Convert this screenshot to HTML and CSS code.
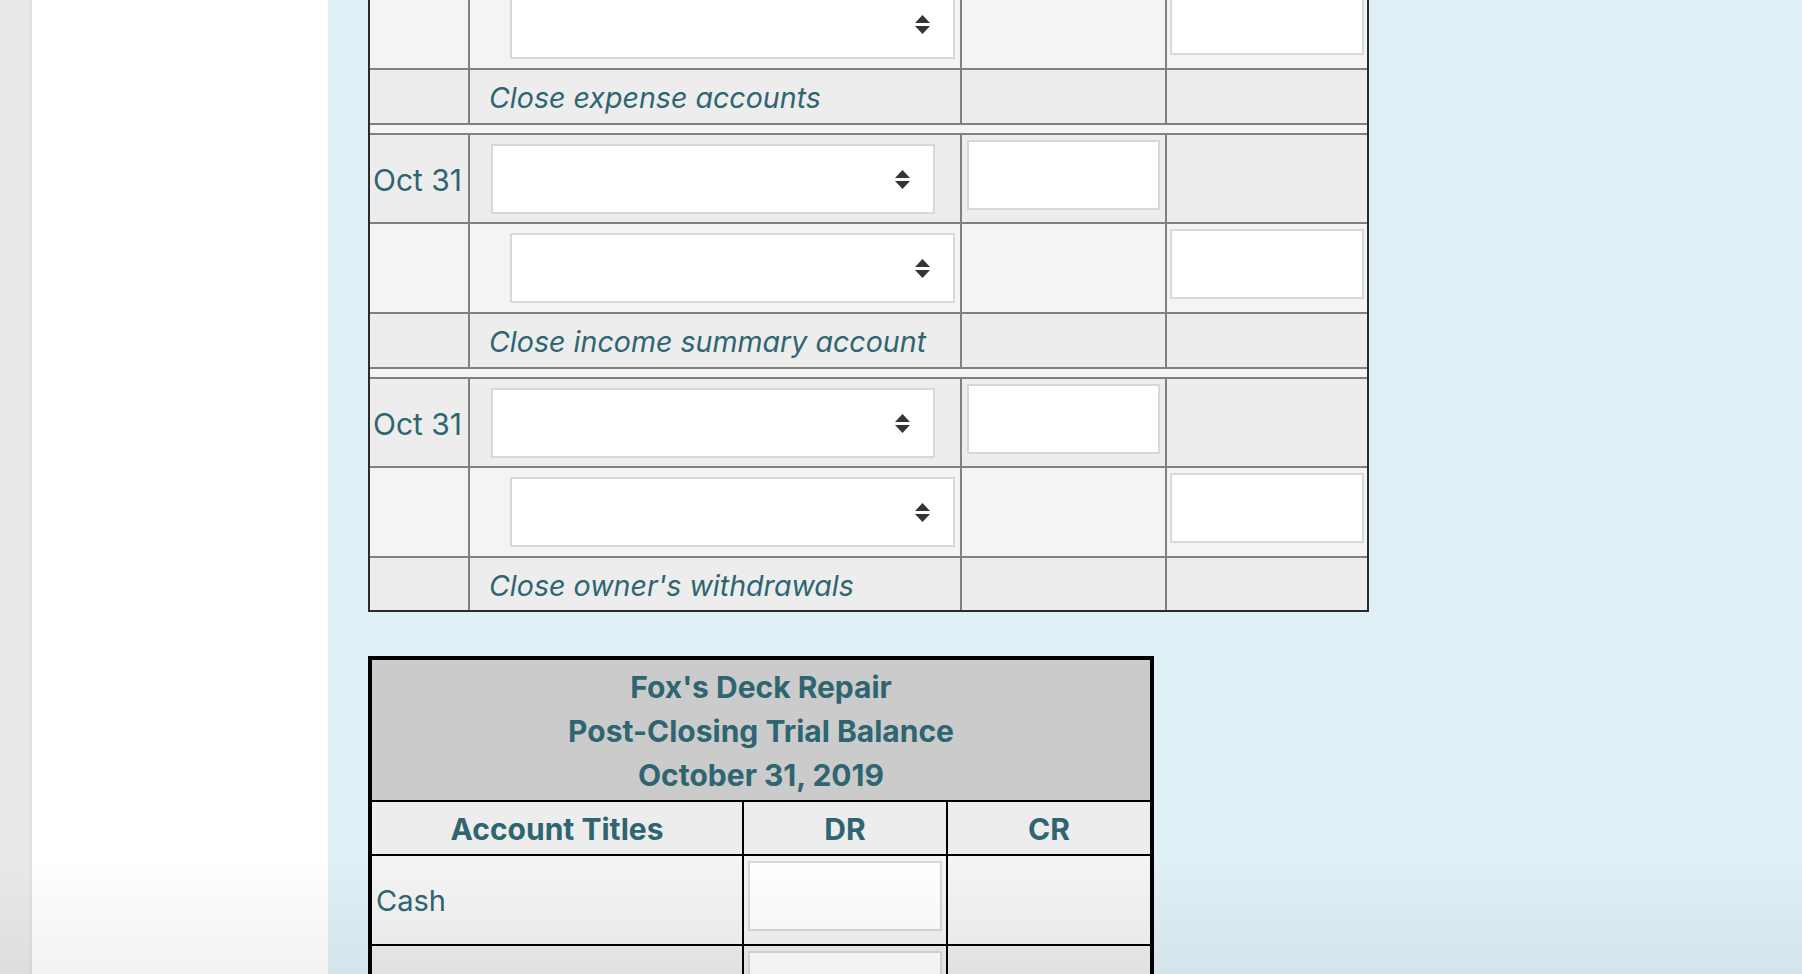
FILE: index.html
```html
<!DOCTYPE html>
<html lang="en">
<head>
<meta charset="utf-8">
<title>Closing entries</title>
<link rel="stylesheet" href="styles.css">
</head>
<body>
<div class="app">
  <div class="rail"></div>
  <div class="sidebar"></div>
  <main class="main">
    <table class="journal">
      <colgroup>
        <col class="k-date"><col class="k-acct"><col class="k-dr"><col class="k-cr">
      </colgroup>
      <tr class="credit">
        <td class="c-date"></td>
        <td class="c-acct"><div class="sel sel-cr"><select></select><svg class="arrows" viewBox="0 0 15 19"><polygon points="0,8 7.5,0 15,8"/><polygon points="0,11 15,11 7.5,19"/></svg></div></td>
        <td class="c-dr"></td>
        <td class="c-cr"><input class="amt amt-cr" type="text"></td>
      </tr>
      <tr class="desc">
        <td class="c-date"></td>
        <td class="c-acct">Close expense accounts</td>
        <td class="c-dr"></td>
        <td class="c-cr"></td>
      </tr>
      <tr class="sep"><td colspan="4"></td></tr>
      <tr class="debit">
        <td class="c-date">Oct 31</td>
        <td class="c-acct"><div class="sel sel-dr"><select></select><svg class="arrows" viewBox="0 0 15 19"><polygon points="0,8 7.5,0 15,8"/><polygon points="0,11 15,11 7.5,19"/></svg></div></td>
        <td class="c-dr"><input class="amt amt-dr" type="text"></td>
        <td class="c-cr"></td>
      </tr>
      <tr class="credit">
        <td class="c-date"></td>
        <td class="c-acct"><div class="sel sel-cr"><select></select><svg class="arrows" viewBox="0 0 15 19"><polygon points="0,8 7.5,0 15,8"/><polygon points="0,11 15,11 7.5,19"/></svg></div></td>
        <td class="c-dr"></td>
        <td class="c-cr"><input class="amt amt-cr" type="text"></td>
      </tr>
      <tr class="desc">
        <td class="c-date"></td>
        <td class="c-acct">Close income summary account</td>
        <td class="c-dr"></td>
        <td class="c-cr"></td>
      </tr>
      <tr class="sep"><td colspan="4"></td></tr>
      <tr class="debit">
        <td class="c-date">Oct 31</td>
        <td class="c-acct"><div class="sel sel-dr"><select></select><svg class="arrows" viewBox="0 0 15 19"><polygon points="0,8 7.5,0 15,8"/><polygon points="0,11 15,11 7.5,19"/></svg></div></td>
        <td class="c-dr"><input class="amt amt-dr" type="text"></td>
        <td class="c-cr"></td>
      </tr>
      <tr class="credit">
        <td class="c-date"></td>
        <td class="c-acct"><div class="sel sel-cr"><select></select><svg class="arrows" viewBox="0 0 15 19"><polygon points="0,8 7.5,0 15,8"/><polygon points="0,11 15,11 7.5,19"/></svg></div></td>
        <td class="c-dr"></td>
        <td class="c-cr"><input class="amt amt-cr" type="text"></td>
      </tr>
      <tr class="desc last">
        <td class="c-date"></td>
        <td class="c-acct">Close owner's withdrawals</td>
        <td class="c-dr"></td>
        <td class="c-cr"></td>
      </tr>
    </table>

    <table class="trial">
      <colgroup>
        <col class="k-t-acct"><col class="k-t-dr"><col class="k-t-cr">
      </colgroup>
      <tr class="t-head">
        <th colspan="3">Fox's Deck Repair<br>Post-Closing Trial Balance<br>October 31, 2019</th>
      </tr>
      <tr class="t-cols">
        <th class="t-acct">Account Titles</th>
        <th class="t-dr">DR</th>
        <th class="t-cr">CR</th>
      </tr>
      <tr class="t-row odd">
        <td class="t-acct">Cash</td>
        <td class="t-dr"><input class="amt amt-t" type="text"></td>
        <td class="t-cr"></td>
      </tr>
      <tr class="t-row even">
        <td class="t-acct"></td>
        <td class="t-dr"><input class="amt amt-t" type="text"></td>
        <td class="t-cr"></td>
      </tr>
    </table>
  </main>
  <div class="fade"></div>
</div>
</body>
</html>
```

FILE: styles.css
```css
html, body {
  margin: 0;
  padding: 0;
}

body {
  font-family: "Inter", "Roboto", "Liberation Sans", sans-serif;
  color: #2f6571;
}

.app {
  position: relative;
  display: flex;
  height: 974px;
  overflow: hidden;
}

.rail {
  width: 30px;
  flex: none;
  background: #e9e9e9;
  border-right: 2px solid #e1e1e1;
}

.sidebar {
  width: 296px;
  flex: none;
  background: #ffffff;
}

.main {
  flex: 1;
  background: #dff0f6;
  padding-left: 40px;
}

/* ---------- journal table ---------- */
.journal {
  margin-top: -20px;
  width: 1001px;
  table-layout: fixed;
  border-collapse: separate;
  border-spacing: 0;
  border: 2px solid #2b2b2b;
  border-top: none;
  font-size: 29px;
}

.k-date { width: 100px; }
.k-acct { width: 492px; }
.k-dr { width: 205px; }
.k-cr { width: 200px; }

.journal td {
  box-sizing: border-box;
  padding: 0;
  border-right: 2px solid #808080;
  border-bottom: 2px solid #808080;
  vertical-align: top;
}

.journal td:last-child {
  border-right: none;
}

.journal .last td {
  border-bottom: none;
}

.journal .credit { height: 90px; }
.journal .credit td { background: #f4f4f4; }

.journal .debit { height: 89px; }
.journal .debit td { background: #ededed; }

.journal .desc { height: 55px; }
.journal .desc.last { height: 52px; }
.journal .desc td {
  background: #ededed;
  vertical-align: middle;
}
.journal .desc .c-acct {
  font-style: italic;
  font-size: 28.6px;
  padding-left: 19px;
  padding-top: 2px;
}

.journal .sep { height: 10px; }
.journal .sep td { background: #f4f4f4; }

.journal .debit .c-date {
  vertical-align: middle;
  font-size: 30px;
  padding-left: 3px;
  padding-top: 2px;
  white-space: nowrap;
}

/* select boxes */
.sel {
  position: relative;
  height: 70px;
  margin-top: 9px;
}
.sel-dr {
  width: 444px;
  margin-left: 21px;
}
.sel-cr {
  width: 445px;
  margin-left: 40px;
}
.sel select {
  appearance: none;
  -webkit-appearance: none;
  display: block;
  box-sizing: border-box;
  width: 100%;
  height: 100%;
  margin: 0;
  border: 2px solid #d4d9df;
  border-radius: 0;
  background: #ffffff;
}
.sel .arrows {
  position: absolute;
  right: 25px;
  top: 26px;
  width: 15px;
  height: 19px;
  fill: #343434;
  pointer-events: none;
}

/* amount inputs */
.amt {
  display: block;
  box-sizing: border-box;
  height: 70px;
  margin: 5px 0 0 0;
  padding: 0;
  border: 2px solid #d4d9df;
  border-radius: 0;
  background: #ffffff;
}
.amt-dr {
  width: 193px;
  margin-left: 5px;
}
.amt-cr {
  width: 194px;
  margin-left: 3px;
}

/* ---------- trial balance ---------- */
.trial {
  margin-top: 44px;
  width: 786px;
  table-layout: fixed;
  border-collapse: separate;
  border-spacing: 0;
  border: 4px solid #000000;
  font-size: 30px;
}

.k-t-acct { width: 372px; }
.k-t-dr { width: 204px; }
.k-t-cr { width: 202px; }

.trial th,
.trial td {
  box-sizing: border-box;
  padding: 0;
  border-right: 2px solid #000000;
  border-bottom: 2px solid #000000;
}
.trial th:last-child,
.trial td:last-child {
  border-right: none;
}

.t-head th {
  background: #cbcbcb;
  font-weight: 700;
  line-height: 44px;
  padding: 5px 0 3px;
  height: 142px;
}

.t-cols { height: 54px; }
.t-cols th {
  background: #ededed;
  font-weight: 700;
  vertical-align: middle;
  padding-top: 2px;
}

.t-row { height: 90px; }
.t-row td { vertical-align: top; }
.t-row.odd td { background: #f4f4f4; }
.t-row.even td { background: #ededed; }
.t-row .t-acct {
  vertical-align: middle;
  font-size: 29px;
  padding-left: 4px;
  padding-top: 0;
}

.amt-t {
  width: 194px;
  margin-left: 4px;
}

/* bottom window fade */
.fade {
  position: absolute;
  left: 0;
  right: 0;
  bottom: 0;
  height: 120px;
  background: linear-gradient(to bottom, rgba(0, 0, 0, 0), rgba(0, 0, 0, 0.05));
  pointer-events: none;
}
```
